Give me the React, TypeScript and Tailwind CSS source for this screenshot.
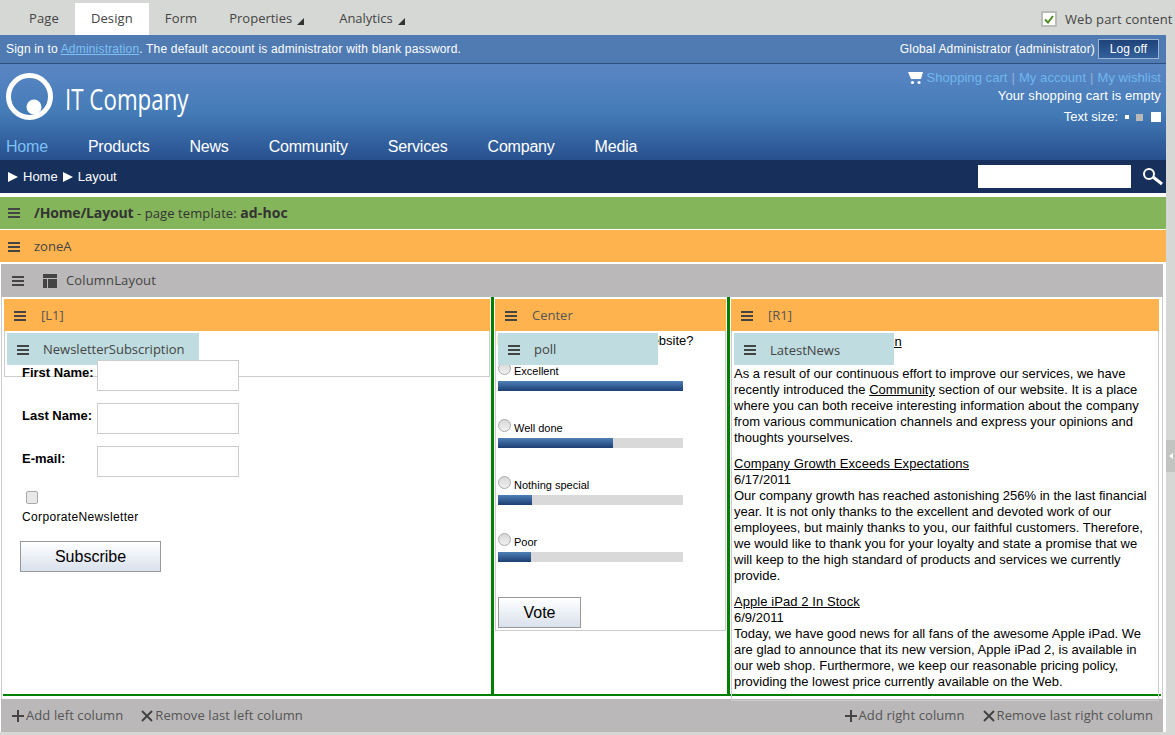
import React from 'react';

const Burger = () => (
  <span className="flex w-3 flex-col gap-[2px] shrink-0">
    <span className="h-[2px] w-3 bg-[#444]" />
    <span className="h-[2px] w-3 bg-[#444]" />
    <span className="h-[2px] w-3 bg-[#444]" />
  </span>
);

const Caret = () => (
  <svg width="7" height="7" viewBox="0 0 7 7" className="ml-[5px] mt-[4px]">
    <polygon points="7,0 7,7 0,7" fill="#333" />
  </svg>
);

const Arrow = () => (
  <svg width="10" height="10" viewBox="0 0 10 10" className="shrink-0">
    <polygon points="0,0 10,5 0,10" fill="#fff" />
  </svg>
);

const Plus = () => (
  <svg width="12" height="12" viewBox="0 0 12 12" className="shrink-0">
    <path d="M6 0v12M0 6h12" stroke="#444" strokeWidth="2" />
  </svg>
);

const Cross = () => (
  <svg width="12" height="12" viewBox="0 0 12 12" className="shrink-0">
    <path d="M1 1l10 10M11 1L1 11" stroke="#444" strokeWidth="2" />
  </svg>
);

const ZoneHeader = ({ label }: { label: string }) => (
  <div className="flex h-8 items-center gap-[15px] bg-[#ffb34f] pl-[10px] pt-px font-['Open_Sans',sans-serif] text-[13px] text-[#555]">
    <Burger />
    <span>{label}</span>
  </div>
);

const Handle = ({ label, className }: { label: string; className: string }) => (
  <div className={`absolute top-[2px] flex h-8 items-center gap-[14px] bg-[#bfdce0] pl-[10px] pt-px font-['Open_Sans',sans-serif] text-[13px] text-[#444] ${className}`}>
    <Burger />
    <span>{label}</span>
  </div>
);

const FormRow = ({ label }: { label: string }) => (
  <div className="flex h-[31px] items-start">
    <label className="w-[75px] whitespace-nowrap pt-[5px] text-[13px] leading-4 font-bold text-black">{label}</label>
    <input className="h-[31px] w-[142px] border border-[#ccc] bg-white" />
  </div>
);

const PollOption = ({ label, width }: { label: string; width: number }) => (
  <div className="h-[57px]">
    <div className="flex h-[19px] items-start">
      <span className="h-[13px] w-[13px] rounded-full border border-[#aaa] bg-gradient-to-b from-[#d8d8d8] to-[#f0f0f0]" />
      <span className="ml-[3px] mt-[2px] text-[11px] leading-[14px] text-black">{label}</span>
    </div>
    <div className="h-[10px] w-[185px] bg-[#d9d9d9]">
      <div className="h-full bg-gradient-to-b from-[#4f80b8] to-[#1d3f73]" style={{ width }} />
    </div>
  </div>
);

const articles = [
  {
    title: 'Our New Community Section',
    date: '6/24/2011',
    text: 'As a result of our continuous effort to improve our services, we have recently introduced the ',
  },
  {
    title: 'Company Growth Exceeds Expectations',
    date: '6/17/2011',
    text: 'Our company growth has reached astonishing 256% in the last financial year. It is not only thanks to the excellent and devoted work of our employees, but mainly thanks to you, our faithful customers. Therefore, we would like to thank you for your loyalty and state a promise that we will keep to the high standard of products and services we currently provide.',
  },
  {
    title: 'Apple iPad 2 In Stock',
    date: '6/9/2011',
    text: 'Today, we have good news for all fans of the awesome Apple iPad. We are glad to announce that its new version, Apple iPad 2, is available in our web shop. Furthermore, we keep our reasonable pricing policy, providing the lowest price currently available on the Web.',
  },
];

const navItems = ['Products', 'News', 'Community', 'Services', 'Company', 'Media'];

export default function App() {
  return (
    <div className="h-[735px] w-[1175px] overflow-hidden bg-[#d6d8d5] font-['Liberation_Sans',sans-serif]">
      {/* Top tabs */}
      <div className="flex h-[35px] items-end justify-between font-['Open_Sans',sans-serif] text-[13px] text-[#444]">
        <div className="flex h-8 pl-[13px]">
          <div className="flex items-center px-4 tracking-[0.12px]">Page</div>
          <div className="flex items-center bg-white px-4 tracking-[0.12px]">Design</div>
          <div className="flex items-center px-4 tracking-[0.12px]">Form</div>
          <div className="flex items-center pl-4 pr-[15px]">Properties<Caret /></div>
          <div className="flex items-center px-5">Analytics<Caret /></div>
        </div>
        <div className="mb-[6px] flex w-[134px] items-center gap-[8px] tracking-[0.12px]">
          <span className="flex h-4 w-4 items-center justify-center border-2 border-[#bbb] bg-white">
            <svg width="10" height="9" viewBox="0 0 10 9">
              <path d="M1 4.5l3 3 5-6.5" fill="none" stroke="#4d8a1e" strokeWidth="2" />
            </svg>
          </span>
          <span className="whitespace-nowrap">Web part content</span>
        </div>
      </div>

      <div className="flex">
        <div className="w-[1166px] bg-white">
          {/* Sign-in bar */}
          <div className="flex h-[29px] items-center justify-between border-b border-[#2a4f80] bg-[#507bb2] pl-[6px] pr-[7px] text-[12px] tracking-[0.18px] text-white">
            <div>
              Sign in to <a className="text-[#7cc0f5] underline">Administration</a>. The default account is administrator with blank password.
            </div>
            <div className="flex items-center gap-[3px]">
              <span>Global Administrator (administrator)</span>
              <button className="h-5 w-[61px] border border-[#9db4d2] bg-gradient-to-b from-[#1f4379] to-[#33609c] text-[12px] text-white">Log off</button>
            </div>
          </div>

          {/* Header */}
          <div className="h-[96px] bg-gradient-to-b from-[#5a86c3] via-[#447cb8] to-[#28508e] pl-[6px] pr-[5px]">
            <div className="flex h-[67px] justify-between">
              <div className="flex items-start pt-[9px]">
                <svg width="47" height="47" viewBox="0 0 47 47" className="shrink-0">
                  <circle cx="23.5" cy="23.5" r="21" fill="none" stroke="#fff" strokeWidth="5" />
                  <circle cx="28" cy="34" r="7.5" fill="#fff" />
                </svg>
                <span className="ml-3 mt-[8px] origin-left scale-x-[0.745] whitespace-nowrap font-['Open_Sans',sans-serif] text-[30px] leading-9 text-white">IT Company</span>
              </div>
              <div className="flex flex-col items-end pt-[6px] text-[13px] leading-4 text-white">
                <div className="flex items-center tracking-[0.06px] text-[#70b6ee]">
                  <svg width="15" height="13" viewBox="0 0 15 13" className="mr-1">
                    <path d="M0 0h15l-2 7H3z" fill="#fff" />
                    <circle cx="4.5" cy="10.5" r="1.6" fill="#fff" />
                    <circle cx="11" cy="10.5" r="1.6" fill="#fff" />
                  </svg>
                  <span>Shopping cart</span>
                  <span className="mx-[4px] text-[#8fb0d6]">|</span>
                  <span>My account</span>
                  <span className="mx-[4px] text-[#8fb0d6]">|</span>
                  <span>My wishlist</span>
                </div>
                <div className="mt-[2px] tracking-[0.12px]">Your shopping cart is empty</div>
                <div className="mt-[5px] flex items-center">
                  Text size:
                  <span className="ml-[7px] h-1 w-1 bg-white" />
                  <span className="ml-[7px] h-[7px] w-[7px] bg-[#b8b8b8]" />
                  <span className="ml-2 h-[10px] w-[10px] bg-white" />
                </div>
              </div>
            </div>
            <nav className="flex h-[29px] items-center gap-10 pt-[2px] text-[16px] tracking-[-0.2px] text-white">
              <span className="text-[#7cc0f5]">Home</span>
              {navItems.map((item) => (
                <span key={item}>{item}</span>
              ))}
            </nav>
          </div>

          {/* Breadcrumb */}
          <div className="flex h-[33px] items-center justify-between bg-[#172f5b] pl-2 pr-[2px] text-[13px] text-white">
            <div className="flex items-center gap-[5px]">
              <Arrow />
              <span>Home</span>
              <Arrow />
              <span>Layout</span>
            </div>
            <div className="flex items-center gap-[10px]">
              <input className="h-[23px] w-[153px] bg-white" />
              <svg width="23" height="19" viewBox="0 0 23 19">
                <circle cx="8" cy="7" r="5" fill="none" stroke="#fff" strokeWidth="2" />
                <path d="M12 10l9 7" stroke="#fff" strokeWidth="3" />
              </svg>
            </div>
          </div>

          {/* Page bar */}
          <div className="mt-1 flex h-8 items-center gap-[14px] bg-[#84b55b] pl-2 font-['Open_Sans',sans-serif] text-[13px] tracking-[0.1px] text-[#333]">
            <Burger />
            <span>
              <b className="text-[14px] font-bold tracking-[-0.15px]">/Home/Layout</b> - page template: <b className="text-[14px] font-bold">ad-hoc</b>
            </span>
          </div>

          {/* zoneA */}
          <div className="mt-px flex h-8 items-center gap-[14px] bg-[#ffb34f] pl-2 pt-px font-['Open_Sans',sans-serif] text-[13px] text-[#444]">
            <Burger />
            <span>zoneA</span>
          </div>

          {/* Column layout */}
          <div className="ml-px mt-[2px] w-[1162px] bg-white">
            <div className="flex h-[33px] items-center bg-[#bab8b9] pl-[11px] pt-px font-['Open_Sans',sans-serif] text-[13px] tracking-[0.15px] text-[#444]">
              <Burger />
              <svg width="14" height="14" viewBox="0 0 14 14" className="ml-[19px]">
                <path d="M0 0h14v4H0zM0 5h4v9H0zM5 5h9v9H5z" fill="#444" />
              </svg>
              <span className="ml-[9px]">ColumnLayout</span>
            </div>

            <div className="flex h-[402px] border-x border-[#ccc] text-black">
              {/* Left */}
              <div className="relative mt-[2px] h-[396px] w-[488px] pl-[2px]">
                <ZoneHeader label="[L1]" />
                <div className="relative">
                  <div className="absolute inset-x-0 top-0 h-[46px] border-x border-b border-[#ccc]" />
                  <Handle label="NewsletterSubscription" className="left-[3px] w-[192px]" />
                  <div className="relative pl-[18px] pt-[29px]">
                    <div className="flex flex-col gap-3">
                      <FormRow label="First Name:" />
                      <FormRow label="Last Name:" />
                      <FormRow label="E-mail:" />
                    </div>
                    <span className="mt-[14px] ml-1 block h-[13px] w-[12px] rounded-[2px] border border-[#aaa] bg-[#e8e8e8]" />
                    <div className="mt-[6px] text-[12px] leading-[14px] tracking-[0.35px]">CorporateNewsletter</div>
                    <button className="mt-[17px] -ml-[2px] h-[31px] w-[141px] border border-[#999] bg-gradient-to-b from-white to-[#d9e1ec] text-[16px] text-black">Subscribe</button>
                  </div>
                </div>
              </div>
              <div className="ml-px h-[398px] w-[3px] bg-[#008000]" />

              {/* Center */}
              <div className="mt-[2px] ml-px h-[396px] w-[231px]">
                <ZoneHeader label="Center" />
                <div className="relative h-[300px] border-x border-b border-[#ccc] pl-[2px]">
                  <Handle label="poll" className="left-[2px] w-[160px]" />
                  <div className="-ml-px pt-[2px] text-[13px] leading-4">How do you like our new website?</div>
                  <div className="mt-[13px]">
                    <PollOption label="Excellent" width={185} />
                    <PollOption label="Well done" width={115} />
                    <PollOption label="Nothing special" width={34} />
                    <PollOption label="Poor" width={33} />
                  </div>
                  <button className="mt-[7px] h-[31px] w-[83px] border border-[#999] bg-gradient-to-b from-white to-[#d9e1ec] text-[16px] text-black">Vote</button>
                </div>
              </div>
              <div className="ml-px h-[398px] w-[3px] bg-[#008000]" />

              {/* Right */}
              <div className="relative z-10 mt-[2px] ml-px w-[428px]">
                <ZoneHeader label="[R1]" />
                <div className="relative h-[370px] border-x border-b border-[#ccc] pl-[2px] pr-[2px] text-[13px] leading-4">
                  <Handle label="LatestNews" className="left-[2px] w-[160px]" />
                  {articles.map((a, i) => (
                    <div key={a.title} className={i === 0 ? 'pt-[3px]' : 'mt-[10px]'}>
                      <a className={i === 0 ? 'underline' : 'underline tracking-[0.07px]'}>{a.title}</a>
                      <div>{a.date}</div>
                      {i === 0 ? (
                        <div>
                          {a.text}
                          <a className="underline">Community</a> section of our website. It is a place where you can both receive interesting information about the company from various communication channels and express your opinions and thoughts yourselves.
                        </div>
                      ) : (
                        <div>{a.text}</div>
                      )}
                    </div>
                  ))}
                </div>
              </div>
            </div>

            {/* Bottom */}
            <div className="relative flex h-[33px] items-center justify-between bg-[#bab8b9] pl-[11px] pr-[10px] font-['Open_Sans',sans-serif] text-[13px] tracking-[0.1px] text-[#555]">
              <div className="absolute inset-x-[2px] -top-[5px] h-[2px] bg-[#008000]" />
              <div className="flex items-center">
                <Plus />
                <span className="ml-[2px]">Add left column</span>
                <span className="ml-[18px]"><Cross /></span>
                <span className="ml-[2px]">Remove last left column</span>
              </div>
              <div className="flex items-center">
                <Plus />
                <span className="ml-[2px]">Add right column</span>
                <span className="ml-[18px]"><Cross /></span>
                <span className="ml-[2px]">Remove last right column</span>
              </div>
            </div>
          </div>
        </div>

        {/* Gutter */}
        <div className="flex-1 pt-[405px]">
          <div className="flex h-8 w-[9px] items-center justify-center bg-[#c2c4c1]">
            <svg width="4" height="6" viewBox="0 0 4 6">
              <polygon points="4,0 4,6 0,3" fill="#fff" />
            </svg>
          </div>
        </div>
      </div>
    </div>
  );
}
